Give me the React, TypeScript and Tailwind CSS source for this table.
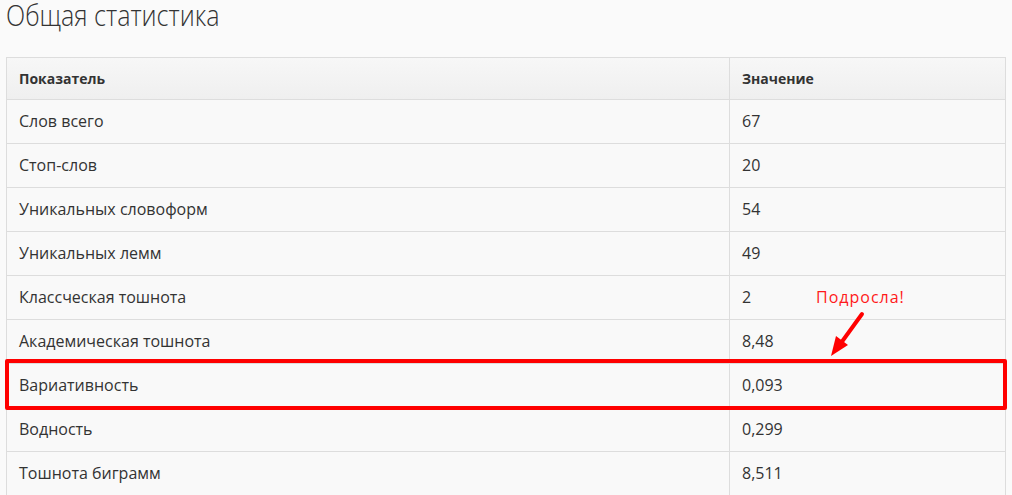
import React from "react";

const rows: [string, string][] = [
  ["Слов всего", "67"],
  ["Стоп-слов", "20"],
  ["Уникальных словоформ", "54"],
  ["Уникальных лемм", "49"],
  ["Классческая тошнота", "2"],
  ["Академическая тошнота", "8,48"],
  ["Вариативность", "0,093"],
  ["Водность", "0,299"],
  ["Тошнота биграмм", "8,511"],
];

export default function App() {
  return (
    <div
      className="relative w-[1012px] h-[495px] overflow-hidden bg-[#fafafa] text-[#333]"
      style={{ fontFamily: '"Open Sans", "Noto Sans", sans-serif' }}
    >
      <div className="ml-[6px] mt-[-5px] h-[62px]">
        <h1 className="inline-block origin-left scale-x-[0.835] whitespace-nowrap text-[30px] font-light leading-[40px] text-[#333]">
          Общая статистика
        </h1>
      </div>
      <div className="ml-[6px] w-[1000px] border border-[#dddddd] bg-[#f9f9f9]">
        <div className="grid grid-cols-[723px_1fr] h-[42px] bg-gradient-to-b from-[#f7f7f7] to-[#efefef] border-b border-[#dddddd] text-[14px] font-bold text-[#333]">
          <div className="flex items-center pl-[12px] border-r border-[#dddddd]">Показатель</div>
          <div className="flex items-center pl-[12px]">Значение</div>
        </div>
        {rows.map(([k, v]) => (
          <div
            key={k}
            className="grid grid-cols-[723px_1fr] h-[44px] border-b border-[#dddddd] text-[16px] text-[#333]"
          >
            <div className="flex items-center pl-[12px] pb-[2px] border-r border-[#dddddd]">{k}</div>
            <div className="flex items-center pl-[12px] pb-[2px]">{v}</div>
          </div>
        ))}
      </div>

      <div className="absolute left-[5px] top-[359px] w-[1002px] h-[51px] border-[4px] border-[#ff0000] rounded-[2px]" />
      <div className="absolute left-[816px] top-[285px] text-[16px] tracking-[1px] text-[#ff1a1a]">
        Подросла!
      </div>
      <svg className="absolute left-[826px] top-[308px]" width="44" height="52" viewBox="0 0 44 52">
        <line x1="36" y1="6" x2="15" y2="35" stroke="#ff0000" strokeWidth="4" strokeLinecap="round" />
        <polygon points="5,48 10,28 22,37" fill="#ff0000" />
      </svg>
    </div>
  );
}
